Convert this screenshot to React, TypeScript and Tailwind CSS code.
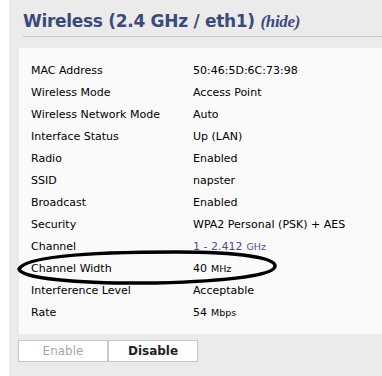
import React from 'react';

const rows: { label: string; value: string; unit?: string; link?: boolean }[] = [
  { label: 'MAC Address', value: '50:46:5D:6C:73:98' },
  { label: 'Wireless Mode', value: 'Access Point' },
  { label: 'Wireless Network Mode', value: 'Auto' },
  { label: 'Interface Status', value: 'Up (LAN)' },
  { label: 'Radio', value: 'Enabled' },
  { label: 'SSID', value: 'napster' },
  { label: 'Broadcast', value: 'Enabled' },
  { label: 'Security', value: 'WPA2 Personal (PSK) + AES' },
  { label: 'Channel', value: '1 - 2.412', unit: 'GHz', link: true },
  { label: 'Channel Width', value: '40', unit: 'MHz' },
  { label: 'Interference Level', value: 'Acceptable' },
  { label: 'Rate', value: '54', unit: 'Mbps' },
];

export default function App() {
  return (
    <div className="flex h-[376px] w-full bg-white" style={{ fontFamily: '"DejaVu Sans", Verdana, sans-serif' }}>
      <div className="ml-[9px] flex-1 bg-[#ebebeb]">
        <div className="ml-[14px] border-b border-[#c8c8c8] pt-[11px] pb-[4px]">
          <h2 className="text-[17px] leading-[20px] font-bold text-[#3b4a7c] tracking-[-0.3px]">
            Wireless (2.4 GHz / eth1){' '}
            <span className="italic" style={{ fontFamily: '"Liberation Serif", serif' }}>(hide)</span>
          </h2>
        </div>

        <div className="relative ml-[10px] mt-[11px] bg-[#fafafa] pt-[12px] pb-[10px] pl-[12px]">
          {rows.map((r) => (
            <div key={r.label} className="flex h-[22px] items-center text-[11px] text-black">
              <div className="w-[162px]">{r.label}</div>
              <div className={r.link ? 'text-[#4b4f8f]' : ''}>
                {r.value}
                {r.unit && <span className="ml-[4px] text-[9.5px]">{r.unit}</span>}
              </div>
            </div>
          ))}

          {/* hand-drawn marker around Channel Width */}
          <svg className="pointer-events-none absolute left-[-3px] top-[200px]" width="264" height="40" viewBox="0 0 264 40">
            <path
              d="M3 21 C 10 8, 80 4, 160 4 C 225 4, 259 10, 259 18 C 259 27, 215 33, 140 35 C 60 36, 4 30, 3 21 Z"
              fill="none"
              stroke="#000"
              strokeWidth="3.5"
            />
          </svg>
        </div>

        <div className="ml-[9px] mt-[6px] flex text-[12px]">
          <button className="h-[22px] w-[90px] border border-[#c8c8c8] bg-white text-[#a8a8a8]">Enable</button>
          <button className="h-[22px] w-[90px] border border-[#c8c8c8] bg-white font-bold text-[#222]">Disable</button>
        </div>
      </div>
    </div>
  );
}
